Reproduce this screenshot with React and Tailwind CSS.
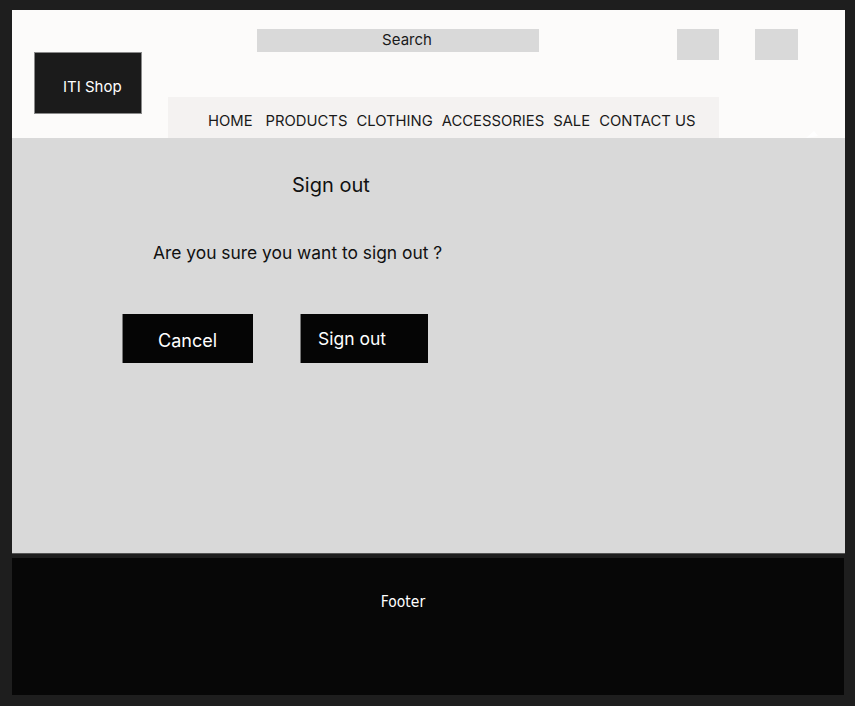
import React from "react";

export default function App() {
  const nav = ["PRODUCTS", "CLOTHING", "ACCESSORIES", "SALE", "CONTACT US"];
  return (
    <div className="w-[855px] h-[706px] bg-[#1e1e1e] pl-[12px] pt-[10px] overflow-hidden" style={{ fontFamily: "Inter, 'Noto Sans', sans-serif" }}>
      <div className="w-[833px] flex flex-col">
        <header className="h-[128px] bg-[#fcfbfa] flex relative">
          <div className="ml-[22px] mt-[42px] w-[108px] h-[62px] bg-[#1b1b1b] border border-[#8a8a8a] flex items-center pl-[28px] pt-[8px] text-white text-[15px]">
            ITI Shop
          </div>
          <div className="ml-[26px] flex flex-col">
            <div className="h-[87px] flex items-start">
              <div className="ml-[89px] mt-[19px] w-[282px] h-[23px] bg-[#d9d9d9] flex items-center justify-center pl-[18px] text-[15px] text-[#1a1a1a]">
                Search
              </div>
              <div className="ml-[138px] mt-[19px] w-[42px] h-[31px] bg-[#d9d9d9]" />
              <div className="ml-[36px] mt-[19px] w-[43px] h-[31px] bg-[#d9d9d9]" />
            </div>
            <nav className="w-[551px] h-[41px] bg-[#f4f2f1] flex items-center pl-[40px] pt-[7px] gap-[9px] text-[14.8px] text-[#1a1a1a] whitespace-nowrap">
              <span className="mr-[4px]">HOME</span>
              {nav.map((n) => (
                <span key={n}>{n}</span>
              ))}
            </nav>
          </div>
          <svg className="absolute left-[794px] top-[121px]" width="14" height="8" viewBox="0 0 14 8">
            <path d="M0 7 L12 5 L8 0 Z" fill="#ffffff" />
          </svg>
        </header>
        <main className="h-[416px] bg-[#d9d9d9] border-b border-[#555] flex flex-col">
          <div className="pl-[280px] pt-[34px] text-[20px] text-[#111] leading-[26px]">Sign out</div>
          <div className="pl-[141px] pt-[43px] text-[17.4px] text-[#111] leading-[24px]">Are you sure you want to sign out ?</div>
          <div className="pl-[110px] pt-[49px] flex gap-[47px]">
            <div className="w-[131px] h-[49px] bg-[#050505] border-l border-[#777] text-white text-[18px] flex items-center pl-[35px] pt-[4px]">
              Cancel
            </div>
            <div className="w-[128px] h-[49px] bg-[#050505] border-l border-[#777] text-white text-[17.5px] flex items-center pl-[17px] pt-[2px]">
              Sign out
            </div>
          </div>
        </main>
        <footer className="mt-[4px] w-[832px] h-[137px] bg-[#070707] flex justify-center">
          <div className="pt-[33px] text-[15.5px] text-white -ml-[50px]" style={{ fontFamily: "'DejaVu Sans Condensed', 'DejaVu Sans', sans-serif" }}>
            Footer
          </div>
        </footer>
      </div>
    </div>
  );
}
